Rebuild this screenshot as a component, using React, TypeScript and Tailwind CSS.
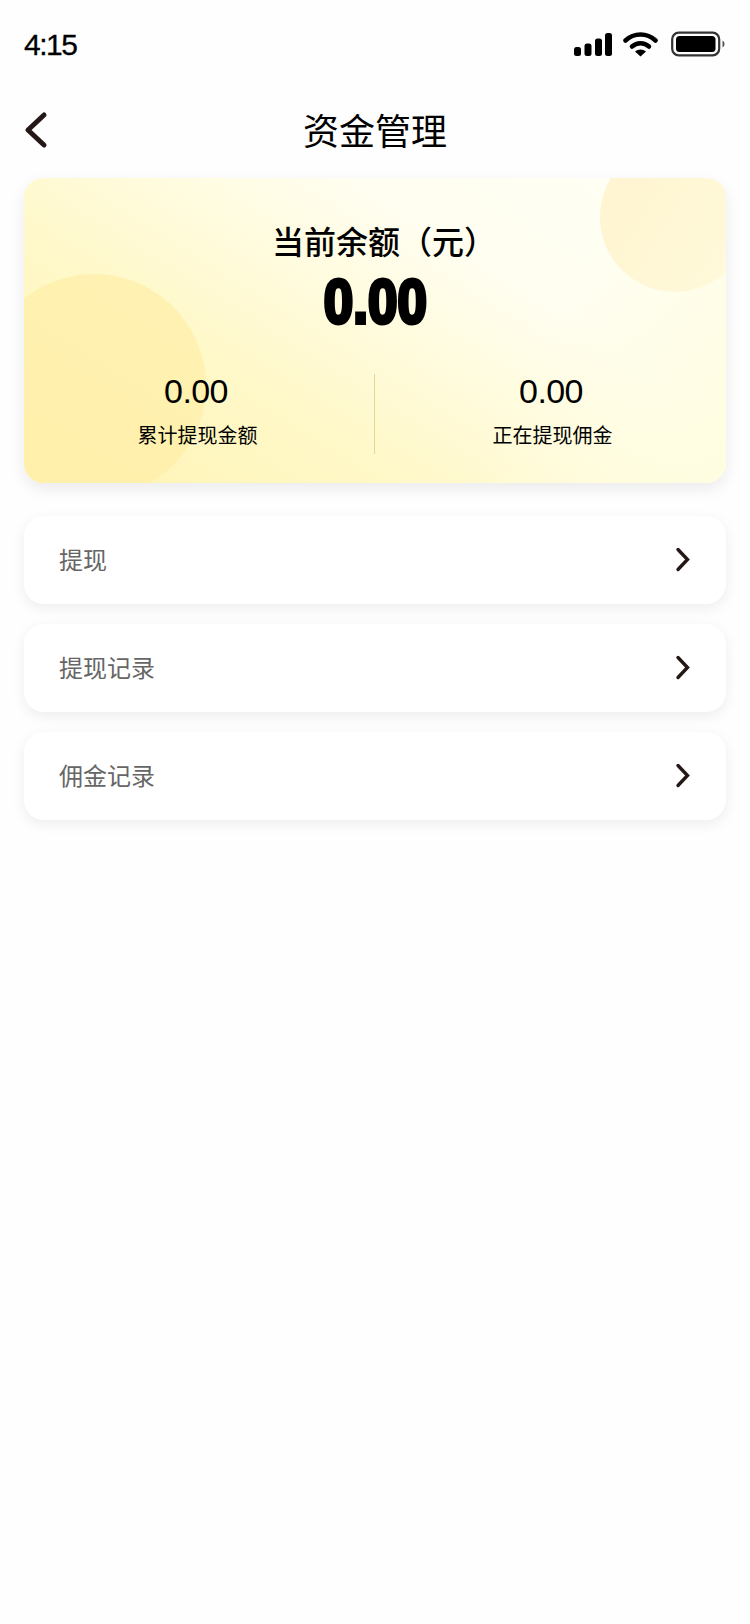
const rows = ['提现', '提现记录', '佣金记录'];

const stats = [
  { id: 'total', value: '0.00', label: '累计提现金额', cls: 'pr-[3px]' },
  { id: 'pending', value: '0.00', label: '正在提现佣金', cls: 'pl-[4px]' },
];

const StatusIcons = () => (
  <div className="flex items-center">
    <svg width="38" height="24" viewBox="0 0 38 24" fill="#000">
      <rect x="0" y="15" width="7" height="9" rx="2.5" />
      <rect x="10.5" y="11.5" width="7" height="12.5" rx="2.5" />
      <rect x="21" y="6.5" width="7" height="17.5" rx="2.5" />
      <rect x="31" y="1" width="7" height="23" rx="2.5" />
    </svg>
    <svg className="ml-[11px]" width="35" height="26" viewBox="0 0 35 26" fill="none">
      <path d="M2.5 9.5C11 1.5 24 1.5 32.5 9.5" stroke="#000" strokeWidth="4.5" strokeLinecap="round" />
      <path d="M9 15.5C13.8 11.2 21.2 11.2 26 15.5" stroke="#000" strokeWidth="4.5" strokeLinecap="round" />
      <path d="M17.5 25.5L12 20.5C15.2 17.8 19.8 17.8 23 20.5Z" fill="#000" />
    </svg>
    <svg className="ml-[13px]" width="54" height="26" viewBox="0 0 54 26" fill="none">
      <rect x="1.2" y="1.7" width="47" height="22.6" rx="6.5" stroke="#333" strokeWidth="2.2" />
      <rect x="5" y="5" width="39.5" height="16" rx="3.5" fill="#000" />
      <path d="M51.5 9.5C53 10.3 53.5 11.5 53.5 13S53 15.7 51.5 16.5Z" fill="#555" />
    </svg>
  </div>
);

export default function App() {
  return (
    <div className="min-h-[1624px] w-[750px] bg-[#fefefe] font-['Noto_Sans_CJK_SC','Liberation_Sans',sans-serif]">
      <div className="flex h-[88px] items-center justify-between pl-[24px] pr-[25px]">
        <span className="mt-[2px] font-['Liberation_Sans',sans-serif] text-[30px] leading-[36px] tracking-[-1.5px] text-black [-webkit-text-stroke:0.3px_#000]">
          4:15
        </span>
        <StatusIcons />
      </div>

      <div className="relative flex h-[84px] items-center justify-center pb-[2px]">
        <svg
          className="absolute left-[22px] top-[22px]"
          width="28"
          height="40"
          viewBox="0 0 28 40"
          fill="none"
        >
          <path
            d="M22 5L6 20L22 35"
            stroke="#231815"
            strokeWidth="5"
            strokeLinecap="round"
            strokeLinejoin="round"
          />
        </svg>
        <h1 className="text-[36px] leading-[48px] font-normal text-black">资金管理</h1>
      </div>

      <div className="relative mx-[24px] mt-[6px] h-[305px] overflow-hidden rounded-[20px] bg-[linear-gradient(212deg,#fffff6_0%,#fffef0_32%,#fff8c8_68%,#fff4b4_100%)] shadow-[0_6px_16px_rgba(0,0,0,0.08)]">
        <div className="absolute left-[576px] top-[-36px] h-[150px] w-[150px] rounded-full bg-[#fff5d2]" />
        <div className="absolute left-[-42px] top-[96px] h-[224px] w-[224px] rounded-full bg-[#ffeea6]/70" />
        <div className="absolute inset-0 bg-[linear-gradient(300deg,#fffde0_0%,rgba(255,253,224,0)_30%)]" />

        <div className="relative flex flex-col items-center pt-[40px]">
          <p className="pl-[18px] text-[32px] leading-[44px] font-medium text-black">当前余额（元）</p>
          <p className="mt-[8px] h-[62px] origin-top scale-x-[0.84] font-['Liberation_Sans',sans-serif] text-[63px] leading-[62px] font-bold text-black [-webkit-text-stroke:4px_#000]">
            0.00
          </p>
        </div>

        <div className="relative mt-[42px] flex h-[80px]">
          {stats.map((stat, index) => (
            <div
              key={stat.id}
              className={`flex flex-1 flex-col items-center text-black ${stat.cls} ${
                index === 0 ? 'border-r border-[#e3d79a]' : ''
              }`}
            >
              <span className="mr-[3px] -mt-[2px] font-['Liberation_Sans',sans-serif] text-[34px] leading-[38px] tracking-[-0.6px]">
                {stat.value}
              </span>
              <span className="mt-[10px] text-[20px] leading-[30px]">{stat.label}</span>
            </div>
          ))}
        </div>
      </div>

      <div className="mx-[24px] mt-[33px] flex flex-col gap-[20px]">
        {rows.map((row) => (
          <div
            key={row}
            className="flex h-[88px] items-center justify-between rounded-[20px] bg-white pl-[35px] pr-[33px] shadow-[0_4px_14px_rgba(0,0,0,0.07)]"
          >
            <span className="mb-[2px] text-[24px] leading-[32px] text-[#666]">{row}</span>
            <svg width="18" height="28" viewBox="0 0 18 28" fill="none">
              <path
                d="M3 3.5L12.5 13.5L3 23.5"
                stroke="#231815"
                strokeWidth="3.4"
                strokeLinecap="round"
                strokeLinejoin="miter"
              />
            </svg>
          </div>
        ))}
      </div>
    </div>
  );
}
